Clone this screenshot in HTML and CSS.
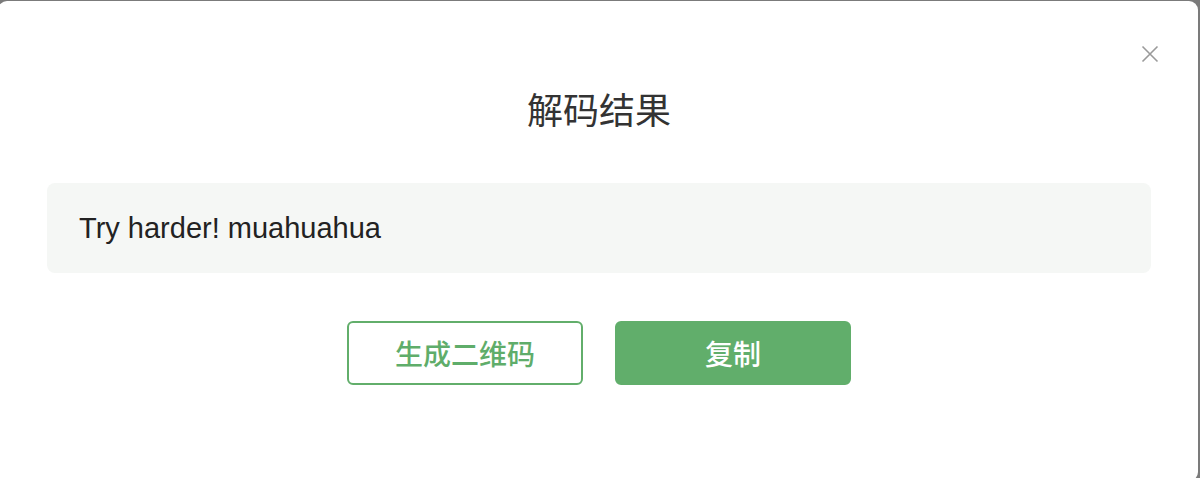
FILE: index.html
```html
<!DOCTYPE html>
<html lang="zh-CN">
<head>
<meta charset="utf-8">
<title>解码结果</title>
<link rel="stylesheet" href="styles.css">
</head>
<body>
<div class="dialog">
  <button class="close" aria-label="关闭">
    <svg width="18" height="18" viewBox="0 0 18 18"><path d="M1.5 1.5 L16.5 16.5 M16.5 1.5 L1.5 16.5" stroke="#9a9a9a" stroke-width="1.6" fill="none"/></svg>
  </button>
  <h2 class="title">解码结果</h2>
  <div class="result">Try harder! muahuahua</div>
  <div class="actions">
    <button class="btn btn-outline">生成二维码</button>
    <button class="btn btn-fill">复制</button>
  </div>
</div>
</body>
</html>
```
FILE: styles.css
```css
html, body {
  margin: 0;
  padding: 0;
  height: 100%;
  overflow: hidden;
}
body {
  background: #7b7b7b;
  font-family: "Liberation Sans", "Noto Sans CJK SC", sans-serif;
}
.dialog {
  position: relative;
  box-sizing: border-box;
  margin: 1px 0 0 -2px;
  width: 1200px;
  height: 480px;
  background: #ffffff;
  border-radius: 9px;
  padding: 83px 47px 0 49px;
  display: flex;
  flex-direction: column;
}
.close {
  position: absolute;
  top: 44px;
  right: 39px;
  width: 18px;
  height: 18px;
  padding: 0;
  border: 0;
  background: none;
  display: flex;
}
.title {
  margin: 0;
  font-family: "Noto Sans CJK SC", sans-serif;
  font-size: 36px;
  font-weight: 400;
  line-height: 48px;
  color: #333333;
  text-align: center;
}
.result {
  margin-top: 51px;
  height: 90px;
  box-sizing: border-box;
  background: #f5f7f5;
  border-radius: 8px;
  padding: 0 32px;
  display: flex;
  align-items: center;
  font-size: 29px;
  color: #222222;
}
.actions {
  margin-top: 48px;
  display: flex;
  justify-content: center;
  gap: 32px;
}
.btn {
  box-sizing: border-box;
  width: 236px;
  height: 64px;
  border-radius: 6px;
  font-family: "Noto Sans CJK SC", sans-serif;
  font-size: 28px;
  font-weight: 500;
  display: flex;
  align-items: center;
  justify-content: center;
  padding: 0;
}
.btn-outline {
  background: #ffffff;
  border: 2px solid #62ae6b;
  color: #5fad6a;
}
.btn-fill {
  background: #61ae6b;
  border: 2px solid #61ae6b;
  color: #ffffff;
}
```
